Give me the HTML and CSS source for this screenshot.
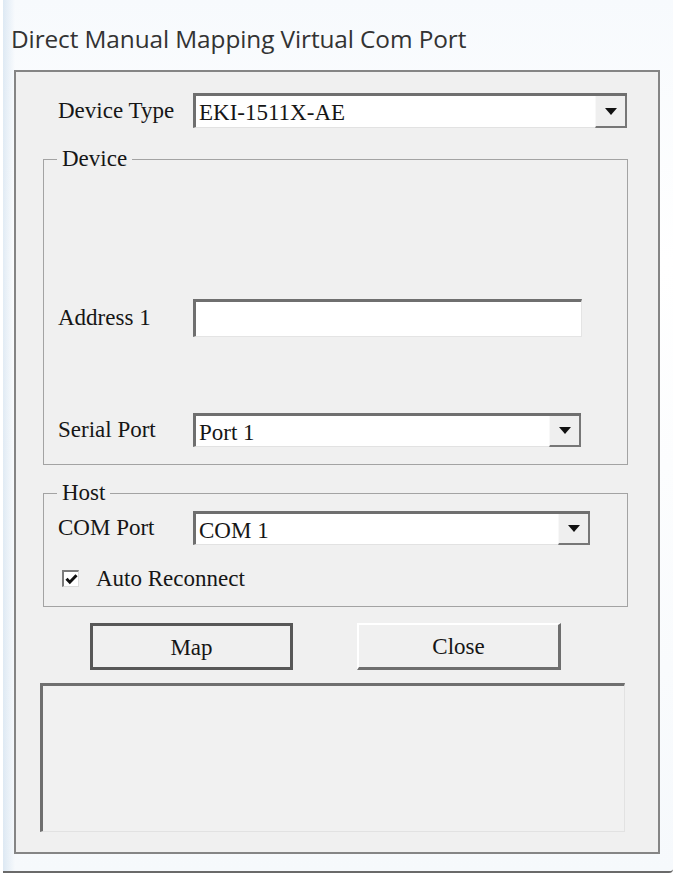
FILE: index.html
```html
<!DOCTYPE html>
<html>
<head>
<meta charset="utf-8">
<title>Direct Manual Mapping Virtual Com Port</title>
<link rel="stylesheet" href="styles.css">
</head>
<body>
<div class="frame">
  <div class="title">Direct Manual Mapping Virtual Com Port</div>
  <div class="client">
    <div class="row row-type">
      <span class="lbl">Device Type</span>
      <div class="combo combo-type">
        <span class="val">EKI-1511X-AE</span>
        <span class="drop"><span class="tri"></span></span>
      </div>
    </div>

    <fieldset class="group group-device">
      <legend>Device</legend>
      <div class="row row-addr">
        <span class="lbl">Address 1</span>
        <div class="edit"></div>
      </div>
      <div class="row row-serial">
        <span class="lbl">Serial Port</span>
        <div class="combo combo-serial">
          <span class="val">Port 1</span>
          <span class="drop"><span class="tri"></span></span>
        </div>
      </div>
    </fieldset>

    <fieldset class="group group-host">
      <legend>Host</legend>
      <div class="row row-com">
        <span class="lbl lbl-com">COM Port</span>
        <div class="combo combo-com">
          <span class="val">COM 1</span>
          <span class="drop"><span class="tri"></span></span>
        </div>
      </div>
      <label class="check-row">
        <span class="checkbox">
          <svg width="13" height="12" viewBox="0 0 13 12"><path d="M1.5 5.8 L4.8 9.2 L11.5 2.2" fill="none" stroke="#111" stroke-width="3"/></svg>
        </span>
        <span class="check-text">Auto Reconnect</span>
      </label>
    </fieldset>

    <div class="buttons">
      <div class="btn btn-default">Map</div>
      <div class="btn btn-plain">Close</div>
    </div>

    <div class="log"></div>
  </div>
</div>
</body>
</html>
```

FILE: styles.css
```css
html, body {
  margin: 0;
  padding: 0;
}

body {
  width: 679px;
  height: 876px;
  background: #ffffff;
  overflow: hidden;
}

.frame {
  margin-left: 3px;
  width: 670px;
  height: 873px;
  box-sizing: border-box;
  border-bottom: 2px solid #6a6a6a;
  border-bottom-right-radius: 4px;
  background:
    linear-gradient(90deg, rgba(190, 212, 232, 0.45) 0px, rgba(255, 255, 255, 0) 12px),
    linear-gradient(180deg, #f7fafd 0%, #ffffff 30%, #f6f9fc 100%);
}

.title {
  height: 70px;
  box-sizing: border-box;
  padding: 24px 0 0 8px;
  font-family: "Open Sans", "Noto Sans", sans-serif;
  font-size: 24.4px;
  line-height: 30px;
  color: #333333;
  letter-spacing: -0.1px;
  white-space: nowrap;
}

.client {
  margin-left: 11px;
  width: 646px;
  height: 784px;
  box-sizing: border-box;
  border: 2px solid #858585;
  background: #f0f0f0;
  padding-top: 21px;
  font-family: "Liberation Serif", "DejaVu Serif", serif;
  font-size: 23px;
  color: #161616;
}

.row {
  display: flex;
  align-items: center;
}

.lbl {
  flex: none;
  white-space: nowrap;
}

/* Device Type row */
.row-type {
  margin-left: 42px;
  height: 35px;
}
.row-type .lbl {
  width: 135px;
}

/* combo boxes */
.combo {
  display: flex;
  align-items: stretch;
  box-sizing: border-box;
  background: #ffffff;
  border-top: 3px solid #6f6f6f;
  border-left: 3px solid #6f6f6f;
  border-bottom: 1px solid #e2e2e2;
}
.combo .val {
  flex: 1;
  padding-left: 3px;
  display: flex;
  align-items: center;
  line-height: 1;
  padding-top: 2px;
}
.combo .drop {
  flex: none;
  width: 29px;
  margin-bottom: -1px;
  background: #efefef;
  border-left: 1px solid #f8f8f8;
  border-right: 2px solid #777777;
  border-bottom: 2px solid #777777;
  display: flex;
  align-items: center;
  justify-content: center;
}
.tri {
  width: 0;
  height: 0;
  border-left: 6px solid transparent;
  border-right: 6px solid transparent;
  border-top: 7px solid #111111;
}
.combo-type {
  width: 434px;
  height: 35px;
}
.combo-serial {
  width: 388px;
  height: 34px;
}
.combo-com {
  width: 397px;
  height: 34px;
}

/* group boxes */
.group {
  margin: 20px 0 0 27px;
  width: 585px;
  box-sizing: border-box;
  border: 1px solid #a3a3a3;
  padding: 0;
  min-inline-size: 0;
}
.group legend {
  margin-left: 13px;
  padding: 0 5px;
  line-height: 22px;
  height: 22px;
}
.group-device {
  height: 317px;
}
.row-addr {
  margin-top: 129px;
  margin-left: 14px;
  height: 38px;
}
.row-addr .lbl,
.row-serial .lbl,
.row-com .lbl {
  width: 135px;
}
.edit {
  width: 389px;
  height: 38px;
  box-sizing: border-box;
  background: #ffffff;
  border-top: 3px solid #6f6f6f;
  border-left: 3px solid #6f6f6f;
  border-right: 1px solid #e4e4e4;
  border-bottom: 1px solid #e4e4e4;
}
.row-serial {
  margin-top: 76px;
  margin-left: 14px;
  height: 34px;
}

.group-host {
  margin-top: 17px;
  height: 125px;
}
.row-com {
  margin-top: 7px;
  margin-left: 14px;
  height: 34px;
}

.check-row {
  display: flex;
  align-items: center;
  margin: 21px 0 0 18px;
  height: 24px;
}
.checkbox {
  width: 17px;
  height: 17px;
  box-sizing: border-box;
  background: #ffffff;
  border-top: 2px solid #7a7a7a;
  border-left: 2px solid #7a7a7a;
  border-right: 1px solid #dcdcdc;
  border-bottom: 1px solid #dcdcdc;
  display: flex;
  align-items: center;
  justify-content: center;
}
.check-text {
  margin-left: 17px;
  padding-top: 2px;
}

/* buttons */
.buttons {
  display: flex;
  gap: 64px;
  margin: 16px 0 0 74px;
  height: 47px;
}
.btn {
  box-sizing: border-box;
  width: 203px;
  height: 47px;
  display: flex;
  align-items: center;
  justify-content: center;
  background: #f0f0f0;
  padding-top: 2px;
}
.btn-default {
  border: 3px solid #575757;
}
.btn-plain {
  width: 204px;
  border-top: 2px solid #ffffff;
  border-left: 2px solid #ffffff;
  border-right: 3px solid #6e6e6e;
  border-bottom: 3px solid #6e6e6e;
}

/* output list */
.log {
  margin: 13px 0 0 24px;
  width: 585px;
  height: 149px;
  box-sizing: border-box;
  background: #f1f1f1;
  border-top: 3px solid #6f6f6f;
  border-left: 3px solid #6f6f6f;
  border-right: 1px solid #e2e2e2;
  border-bottom: 1px solid #e2e2e2;
}
```
